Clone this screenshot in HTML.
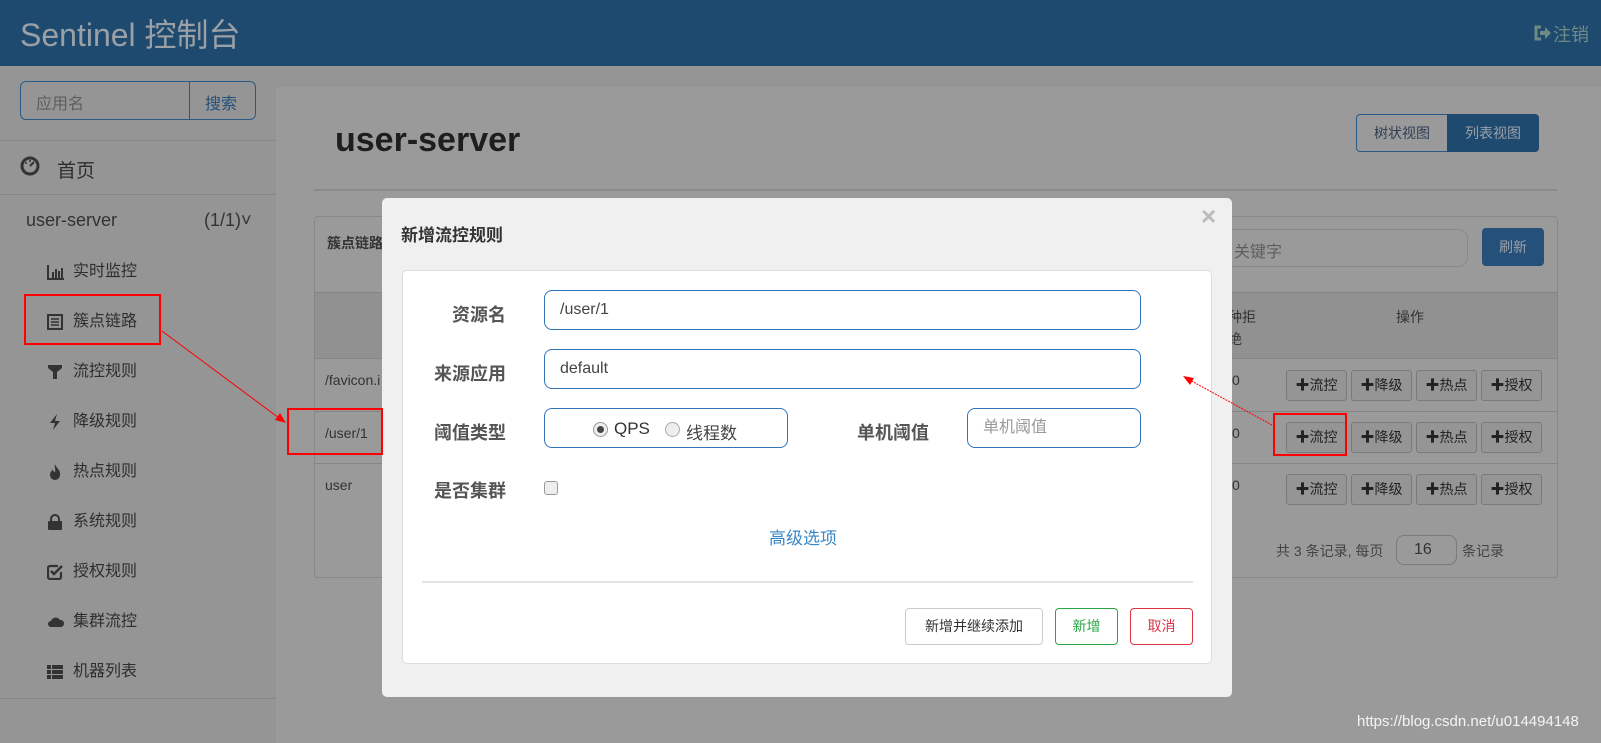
<!DOCTYPE html>
<html><head><meta charset="utf-8"><style>
*{box-sizing:border-box;margin:0;padding:0}
body{width:1601px;height:743px;overflow:hidden;background:#979797;font-family:"Liberation Sans","Noto Sans CJK SC",sans-serif;position:relative;color:#2e2e2e}
.a{position:absolute;white-space:nowrap}
.btn{position:absolute;border:1px solid #7a7a7a;border-radius:3px;background:#959595;font-size:14px;text-align:center;line-height:28px;color:#222}
.mi{position:absolute;left:47px;width:150px;height:22px;font-size:16px;color:#2e2e2e;line-height:20px;white-space:nowrap}
.mi svg{position:absolute;left:0;top:2px}
.mi span{position:absolute;left:26px;top:0;white-space:nowrap}
.lbl{position:absolute;font-size:17px;font-weight:bold;color:#555;text-align:right;width:120px}
.inp{position:absolute;border:1px solid #2f76b8;border-radius:8px;background:#fff;font-size:16px;color:#444;padding-left:15px}
</style></head><body>
<!-- header -->
<div class="a" style="left:0;top:0;width:1601px;height:66px;background:#1f4a70"></div>
<div class="a" style="left:20px;top:10px;font-size:32px;color:#9aa0a5">Sentinel 控制台</div>
<svg class="a" style="left:1533px;top:25px" width="18" height="16"><path d="M8 2H3v12h5" fill="none" stroke="#6f8a84" stroke-width="3"/><path d="M7 6h5V2l6 6-6 6v-4H7z" fill="#6f8a84"/></svg>
<div class="a" style="left:1553px;top:21px;font-size:18px;color:#6f8a84">注销</div>
<!-- sidebar -->
<div class="a" style="left:0;top:66px;width:276px;height:677px;background:#959595"></div>
<div class="a" style="left:276px;top:66px;width:1325px;height:21px;background:#959595"></div>
<div class="a" style="left:276px;top:87px;width:1325px;height:656px;background:#9a9a9a"></div>
<div class="a" style="left:20px;top:81px;width:236px;height:39px;border:1px solid #2a5a86;border-radius:6px"></div>
<div class="a" style="left:189px;top:81px;width:1px;height:39px;background:#2a5a86"></div>
<div class="a" style="left:36px;top:90px;font-size:16px;color:#5e5e5e">应用名</div>
<div class="a" style="left:205px;top:90px;font-size:16px;color:#24507a">搜索</div>
<div class="a" style="left:0;top:140px;width:276px;height:1px;background:#878787"></div>
<svg class="a" style="left:20px;top:156px" width="20" height="20"><circle cx="10" cy="10" r="8" fill="none" stroke="#333" stroke-width="3"/><path d="M10 10l4-4" stroke="#333" stroke-width="2"/><circle cx="6" cy="7" r="1" fill="#333"/><circle cx="10" cy="5" r="1" fill="#333"/></svg>
<div class="a" style="left:57px;top:156px;font-size:19px;color:#2e2e2e">首页</div>
<div class="a" style="left:0;top:194px;width:276px;height:1px;background:#878787"></div>
<div class="a" style="left:26px;top:210px;font-size:18px;color:#333">user-server</div>
<div class="a" style="left:204px;top:210px;font-size:18px;color:#333">(1/1)˅</div>
<div class="mi" style="top:262px"><svg width="18" height="16"><path d="M1 1v14h16" fill="none" stroke="#333" stroke-width="2"/><rect x="5" y="8" width="2" height="6" fill="#333"/><rect x="8" y="5" width="2" height="9" fill="#333"/><rect x="11" y="7" width="2" height="7" fill="#333"/><rect x="14" y="4" width="2" height="10" fill="#333"/></svg><span>实时监控</span></div>
<div class="mi" style="top:312px"><svg width="16" height="16"><rect x="1" y="1" width="14" height="14" fill="none" stroke="#333" stroke-width="2"/><path d="M4 5h8M4 8h8M4 11h8" stroke="#333" stroke-width="1.5"/></svg><span>簇点链路</span></div>
<div class="mi" style="top:362px"><svg width="16" height="16"><path d="M1 1h14v3l-5 4v7h-4V8L1 4z" fill="#333"/></svg><span>流控规则</span></div>
<div class="mi" style="top:412px"><svg width="16" height="16"><path d="M10 0L3 9h5l-2 7 7-9H8z" fill="#333"/></svg><span>降级规则</span></div>
<div class="mi" style="top:462px"><svg width="16" height="16"><path d="M8 0c1 4 6 6 5 11a5 5 0 01-10 0c0-3 2-4 3-6 0 2 1 3 2 3 1-3-1-5 0-8z" fill="#333"/></svg><span>热点规则</span></div>
<div class="mi" style="top:512px"><svg width="16" height="16"><path d="M4 7V5a4 4 0 018 0v2" fill="none" stroke="#333" stroke-width="2"/><rect x="1" y="7" width="14" height="9" rx="1" fill="#333"/></svg><span>系统规则</span></div>
<div class="mi" style="top:562px"><svg width="16" height="16"><path d="M14 8v5a2 2 0 01-2 2H3a2 2 0 01-2-2V4a2 2 0 012-2h8" fill="none" stroke="#333" stroke-width="2.2"/><path d="M4 7l3 3 8-8" fill="none" stroke="#333" stroke-width="2.5"/></svg><span>授权规则</span></div>
<div class="mi" style="top:612px"><svg width="18" height="16"><path d="M4 13a3 3 0 010-6 5 5 0 019-1 3.5 3.5 0 011 7z" fill="#333"/></svg><span>集群流控</span></div>
<div class="mi" style="top:662px"><svg width="16" height="16"><rect x="0" y="1" width="4" height="4" fill="#333"/><rect x="5" y="1" width="11" height="4" fill="#333"/><rect x="0" y="6" width="4" height="4" fill="#333"/><rect x="5" y="6" width="11" height="4" fill="#333"/><rect x="0" y="11" width="4" height="4" fill="#333"/><rect x="5" y="11" width="11" height="4" fill="#333"/></svg><span>机器列表</span></div>
<div class="a" style="left:0;top:698px;width:276px;height:1px;background:#878787"></div>
<!-- main -->
<div class="a" style="left:335px;top:121px;font-size:34px;font-weight:bold;color:#1e1e1e">user-server</div>
<div class="a" style="left:314px;top:189px;width:1243px;height:2px;background:#8a8a8a"></div>
<div class="a" style="left:1356px;top:114px;width:92px;height:38px;border:1px solid #2a5a86;border-radius:4px 0 0 4px;font-size:14px;line-height:36px;text-align:center;color:#2e3e55">树状视图</div>
<div class="a" style="left:1447px;top:114px;width:92px;height:38px;background:#1f4a70;border-radius:0 4px 4px 0;font-size:14px;line-height:38px;text-align:center;color:#9aa0a8">列表视图</div>
<div class="a" style="left:314px;top:216px;width:1244px;height:362px;border:1px solid #888;border-radius:4px"></div>
<div class="a" style="left:327px;top:233px;font-size:14px;font-weight:bold;color:#333">簇点链路</div>
<div class="a" style="left:1170px;top:229px;width:298px;height:38px;border:1px solid #888;border-radius:10px"></div>
<div class="a" style="left:1234px;top:238px;font-size:16px;color:#5e5e5e">关键字</div>
<div class="a" style="left:1482px;top:228px;width:62px;height:38px;background:#24507a;border-radius:4px;font-size:14px;line-height:38px;text-align:center;color:#9aa0a8">刷新</div>
<div class="a" style="left:315px;top:292px;width:1242px;height:67px;background:#919191;border-top:1px solid #858585;border-bottom:1px solid #858585"></div>
<div class="a" style="left:1228px;top:306px;font-size:14px;line-height:22px;color:#333">种拒<br>绝</div>
<div class="a" style="left:1396px;top:307px;font-size:14px;color:#333">操作</div>
<div class="a" style="left:315px;top:411px;width:1242px;height:1px;background:#858585"></div>
<div class="a" style="left:315px;top:463px;width:1242px;height:1px;background:#858585"></div>
<div class="a" style="left:325px;top:372px;font-size:14px;color:#333">/favicon.i</div>
<div class="a" style="left:325px;top:425px;font-size:14px;color:#333">/user/1</div>
<div class="a" style="left:325px;top:477px;font-size:14px;color:#333">user</div>
<div class="a" style="left:1232px;top:372px;font-size:14px;color:#333">0</div>
<div class="a" style="left:1232px;top:425px;font-size:14px;color:#333">0</div>
<div class="a" style="left:1232px;top:477px;font-size:14px;color:#333">0</div>
<div class="btn" style="left:1286px;top:370px;width:61px;height:31px">✚流控</div>
<div class="btn" style="left:1351px;top:370px;width:61px;height:31px">✚降级</div>
<div class="btn" style="left:1416px;top:370px;width:61px;height:31px">✚热点</div>
<div class="btn" style="left:1481px;top:370px;width:61px;height:31px">✚授权</div>
<div class="btn" style="left:1286px;top:422px;width:61px;height:31px">✚流控</div>
<div class="btn" style="left:1351px;top:422px;width:61px;height:31px">✚降级</div>
<div class="btn" style="left:1416px;top:422px;width:61px;height:31px">✚热点</div>
<div class="btn" style="left:1481px;top:422px;width:61px;height:31px">✚授权</div>
<div class="btn" style="left:1286px;top:474px;width:61px;height:31px">✚流控</div>
<div class="btn" style="left:1351px;top:474px;width:61px;height:31px">✚降级</div>
<div class="btn" style="left:1416px;top:474px;width:61px;height:31px">✚热点</div>
<div class="btn" style="left:1481px;top:474px;width:61px;height:31px">✚授权</div>
<div class="a" style="left:1276px;top:541px;font-size:14px;color:#444">共 3 条记录, 每页</div>
<div class="a" style="left:1396px;top:535px;width:61px;height:30px;border:1px solid #7a7a7a;border-radius:8px;font-size:16px;line-height:28px;padding-left:17px;color:#333">16</div>
<div class="a" style="left:1462px;top:541px;font-size:14px;color:#444">条记录</div>
<!-- modal -->
<div class="a" style="left:382px;top:198px;width:850px;height:499px;background:#f0f0f0;border-radius:5px"></div>
<div class="a" style="left:401px;top:221px;font-size:17px;font-weight:bold;color:#333">新增流控规则</div>
<div class="a" style="left:1201px;top:201px;font-size:26px;font-weight:bold;color:#bbb">×</div>
<div class="a" style="left:402px;top:270px;width:810px;height:394px;background:#fff;border:1px solid #ddd;border-radius:5px"></div>
<div class="lbl" style="left:386px;top:301px;font-size:18px">资源名</div>
<div class="lbl" style="left:386px;top:360px;font-size:18px">来源应用</div>
<div class="lbl" style="left:386px;top:419px;font-size:18px">阈值类型</div>
<div class="lbl" style="left:386px;top:477px;font-size:18px">是否集群</div>
<div class="inp" style="left:544px;top:290px;width:597px;height:40px;line-height:38px">/user/1</div>
<div class="inp" style="left:544px;top:349px;width:597px;height:40px;line-height:38px">default</div>
<div class="inp" style="left:544px;top:408px;width:244px;height:40px"></div>
<div class="a" style="left:593px;top:422px;width:15px;height:15px;border:1px solid #999;border-radius:50%;background:#eee"><div style="margin:3px;width:7px;height:7px;border-radius:50%;background:#444"></div></div>
<div class="a" style="left:614px;top:419px;font-size:17px;color:#333">QPS</div>
<div class="a" style="left:665px;top:422px;width:15px;height:15px;border:1px solid #aaa;border-radius:50%;background:#eee"></div>
<div class="a" style="left:686px;top:419px;font-size:17px;color:#444">线程数</div>
<div class="lbl" style="left:809px;top:419px;font-size:18px">单机阈值</div>
<div class="inp" style="left:967px;top:408px;width:174px;height:40px;line-height:38px;color:#999">单机阈值</div>
<div class="a" style="left:544px;top:481px;width:14px;height:14px;border:1px solid #999;border-radius:3px;background:#eee"></div>
<div class="a" style="left:769px;top:524px;font-size:17px;color:#3a87c8">高级选项</div>
<div class="a" style="left:422px;top:581px;width:771px;height:2px;background:#e3e3e3"></div>
<div class="a" style="left:905px;top:608px;width:138px;height:37px;border:1px solid #ccc;border-radius:4px;font-size:14px;line-height:35px;text-align:center;color:#333">新增并继续添加</div>
<div class="a" style="left:1055px;top:608px;width:63px;height:37px;border:1px solid #28a745;border-radius:4px;font-size:14px;line-height:35px;text-align:center;color:#28a745">新增</div>
<div class="a" style="left:1130px;top:608px;width:63px;height:37px;border:1px solid #dc3545;border-radius:4px;font-size:14px;line-height:35px;text-align:center;color:#dc3545">取消</div>
<!-- annotations -->
<div class="a" style="left:24px;top:294px;width:137px;height:51px;border:2px solid #f00"></div>
<div class="a" style="left:287px;top:408px;width:96px;height:47px;border:2px solid #f00"></div>
<div class="a" style="left:1273px;top:413px;width:74px;height:43px;border:2px solid #f00"></div>
<svg class="a" style="left:0;top:0" width="1601" height="743"><line x1="162" y1="331" x2="283" y2="421" stroke="#f00" stroke-width="1"/><polygon points="286,423 275,420 280,413" fill="#f00"/><line x1="1272" y1="425" x2="1186" y2="378" stroke="#f00" stroke-width="1" stroke-dasharray="2,1"/><polygon points="1183,376 1194,378 1190,385" fill="#f00"/></svg>
<div class="a" style="left:1357px;top:713px;font-size:15px;color:#f4f4f4">https://blog.csdn.net/u014494148</div>
</body></html>
